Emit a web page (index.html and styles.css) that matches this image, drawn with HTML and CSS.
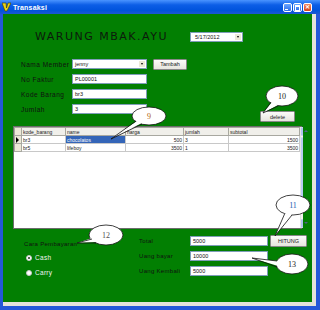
FILE: index.html
```html
<!DOCTYPE html>
<html lang="id">
<head>
    <meta charset="UTF-8">
    <title>Transaksi</title>
    <link rel="stylesheet" href="styles.css">
</head>
<body>
<div class="window">
    <div class="titlebar">
        <svg class="app-icon" width="9" height="10" viewBox="0 0 9 10">
            <path d="M0 1 L4 1 L4.5 6 L6 1 L9 1 L5 9 L3 9 Z" fill="#e8d21a" stroke="#3a3a00" stroke-width="0.6"/>
        </svg>
        <span class="title">Transaksi</span>
        <div class="controls">
            <span class="ctl min"></span>
            <span class="ctl max"></span>
            <span class="ctl close">&#x2715;</span>
        </div>
    </div>

    <div class="frame">
        <div class="client">
            <div class="header">
                <h1>WARUNG MBAK.AYU</h1>
                <div class="combo date">5/17/2012<span class="drop"></span></div>
            </div>

            <div class="form">
                <div class="row">
                    <label>Nama Member</label>
                    <div class="combo field">jenny<span class="drop"></span></div>
                    <button class="btn tambah">Tambah</button>
                </div>
                <div class="row">
                    <label>No Faktur</label>
                    <div class="field">PL00001</div>
                </div>
                <div class="row">
                    <label>Kode Barang</label>
                    <div class="field">br3</div>
                </div>
                <div class="row">
                    <label>Jumlah</label>
                    <div class="field">3</div>
                </div>
            </div>

            <div class="actions">
                <button class="btn delete">delete</button>
            </div>

            <div class="grid">
                <table>
                    <tr class="head">
                        <td class="rh"></td>
                        <td class="c1">kode_barang</td>
                        <td class="c2">name</td>
                        <td class="c3">harga</td>
                        <td class="c4">jumlah</td>
                        <td class="c5">subtotal</td>
                    </tr>
                    <tr>
                        <td class="rh"><span class="cur"></span></td>
                        <td>br3</td>
                        <td class="sel">chocolatos</td>
                        <td class="num">500</td>
                        <td>3</td>
                        <td class="num">1500</td>
                    </tr>
                    <tr>
                        <td class="rh"></td>
                        <td>br5</td>
                        <td>lifeboy</td>
                        <td class="num">3500</td>
                        <td>1</td>
                        <td class="num">3500</td>
                    </tr>
                </table>
                <div class="scrollbar">
                    <span class="arrow up"></span>
                    <span class="thumb"></span>
                    <span class="arrow down"></span>
                </div>
            </div>

            <div class="bottom">
                <div class="pay">
                    <div class="pay-title">Cara Pembayaran</div>
                    <div class="radio"><span class="dot on"></span>Cash</div>
                    <div class="radio"><span class="dot"></span>Carry</div>
                </div>
                <div class="totals">
                    <div class="row">
                        <label>Total</label>
                        <div class="field wide">5000</div>
                        <button class="btn hitung">HITUNG</button>
                    </div>
                    <div class="row">
                        <label>Uang bayar</label>
                        <div class="field wide">10000</div>
                    </div>
                    <div class="row">
                        <label>Uang Kembali</label>
                        <div class="field wide">5000</div>
                    </div>
                </div>
            </div>
        </div>
    </div>

    <!-- balloon notes drawn on top of the form -->
    <svg class="callouts" width="320" height="310" viewBox="0 0 320 310">
        <g class="note">
            <ellipse cx="149" cy="116" rx="17" ry="9"/>
            <path class="fill" d="M137 121 L112 138 L142 123 Z"/>
            <polyline points="136,121 111,139 142,124"/>
            <text x="149" y="119" fill="#b06010">9</text>
        </g>
        <g class="note">
            <ellipse cx="282" cy="96" rx="16" ry="10"/>
            <path class="fill" d="M272 102 L263 113 L278 105 Z"/>
            <polyline points="271,102 263,113 278,106"/>
            <text x="282" y="99" fill="#202020">10</text>
        </g>
        <g class="note">
            <ellipse cx="293" cy="205" rx="17" ry="10"/>
            <path class="fill" d="M285 212 L275 236 L292 214 Z"/>
            <polyline points="285,213 275,236 292,215"/>
            <text x="293" y="208" fill="#1a5ab0">11</text>
        </g>
        <g class="note">
            <ellipse cx="106" cy="235" rx="17" ry="10"/>
            <path class="fill" d="M92 238 L77 243 L96 242 Z"/>
            <polyline points="92,239 77,243 96,243"/>
            <text x="106" y="238" fill="#505050">12</text>
        </g>
        <g class="note">
            <ellipse cx="292" cy="264" rx="16" ry="10"/>
            <path class="fill" d="M278 261 L252 258 L278 266 Z"/>
            <polyline points="277,261 252,258 277,267"/>
            <text x="292" y="267" fill="#202020">13</text>
        </g>
    </svg>
</div>
</body>
</html>
```

FILE: styles.css
```css
body {
    margin: 0;
    font-family: "Liberation Sans", Arial, sans-serif;
}

.window {
    position: relative;
    width: 320px;
    height: 310px;
    background: #2458d8;
    display: flex;
    flex-direction: column;
}

.titlebar {
    height: 14px;
    display: flex;
    align-items: center;
    padding: 0 8px 0 2px;
    background: linear-gradient(#4a94ff, #0c5ee6 35%, #0053dc 75%, #1c58d0);
    color: #fff;
}
.app-icon { display: block; }
.title {
    font-size: 7px;
    font-weight: bold;
    margin-left: 2px;
    letter-spacing: 0.2px;
}
.controls {
    margin-left: auto;
    display: flex;
    gap: 1px;
}
.ctl {
    position: relative;
    width: 7px;
    height: 7px;
    border: 1px solid #fff;
    border-radius: 2px;
    background: linear-gradient(#6aa6ff, #2c6ce8);
    color: #fff;
    font-size: 6px;
    line-height: 7px;
    text-align: center;
}
.ctl.min::after {
    content: "";
    position: absolute;
    left: 1px;
    bottom: 1px;
    width: 3px;
    height: 1px;
    background: #fff;
}
.ctl.max::after {
    content: "";
    position: absolute;
    left: 1px;
    top: 1px;
    width: 3px;
    height: 3px;
    border: 1px solid #fff;
    border-top-width: 2px;
}
.ctl.close {
    background: linear-gradient(#f08a64, #d8421a);
    font-weight: bold;
}

.frame {
    flex: 1;
    display: flex;
    margin: 0 4px 4px 3px;
    background: #e4e2da;
    padding: 0 4px 4px 0;
}
.client {
    flex: 1;
    background: #027f02;
    display: flex;
    flex-direction: column;
}

/* header */
.header {
    display: flex;
    align-items: center;
    padding: 18px 0 0 32px;
}
h1 {
    margin: 0;
    width: 155px;
    font-family: "DejaVu Sans", sans-serif;
    font-weight: normal;
    font-size: 11px;
    line-height: 10px;
    letter-spacing: 1.5px;
    color: #0c1a0c;
}

.combo, .field {
    position: relative;
    box-sizing: border-box;
    height: 10px;
    background: #fff;
    border: 1px solid #7f9db9;
    font-size: 5.5px;
    line-height: 8px;
    padding-left: 2px;
    color: #111;
}
.combo.date {
    width: 53px;
    padding-left: 4px;
}
.drop {
    position: absolute;
    right: 1px;
    top: 1px;
    width: 6px;
    height: 6px;
    background: #ece9d8;
}
.drop::after {
    content: "";
    position: absolute;
    left: 1.5px;
    top: 2px;
    border: 1.5px solid transparent;
    border-top: 2px solid #000;
}

/* form */
.form {
    display: flex;
    flex-direction: column;
    gap: 5px;
    padding: 17px 0 0 18px;
}
.row {
    display: flex;
    align-items: center;
    height: 10px;
}
label {
    width: 51px;
    font-size: 6.5px;
    letter-spacing: 0.5px;
    color: #101010;
}
.form .field { width: 75px; }

.btn {
    box-sizing: border-box;
    height: 11px;
    padding: 0;
    border: 1px solid #888;
    border-radius: 1px;
    background: linear-gradient(#fbfbf9, #e6e5de);
    font-family: "Liberation Sans", Arial, sans-serif;
    font-size: 5.5px;
    color: #222;
}
.btn.tambah {
    width: 34px;
    margin-left: 6px;
}
.actions {
    display: flex;
    justify-content: flex-end;
    margin-top: -3px;
    padding-right: 17px;
}
.btn.delete { width: 35px; }

/* data grid */
.grid {
    display: flex;
    box-sizing: border-box;
    width: 289px;
    height: 103px;
    margin: 4px 0 0 10px;
    background: #fff;
    border: 1px solid #6c6c6c;
}
table {
    border-collapse: collapse;
    width: 279px;
    align-self: flex-start;
    table-layout: fixed;
}
td {
    height: 7px;
    padding: 0 1px;
    border: 1px solid #c8c8c8;
    font-size: 5px;
    line-height: 6px;
    color: #222;
    white-space: nowrap;
    overflow: hidden;
}
.head td {
    background: #f0efea;
    border-color: #a8a8a0;
}
td.rh {
    width: 4px;
    background: #ece9d8;
    border-color: #a8a8a0;
    position: relative;
}
.c1 { width: 41px; }
.c2 { width: 57px; }
.c3 { width: 55px; }
.c4 { width: 42px; }
.c5 { width: 68px; }
td.num { text-align: right; }
td.sel {
    background: #3465b8;
    color: #fff;
}
.cur {
    position: absolute;
    left: 1px;
    top: 1px;
    border: 3px solid transparent;
    border-left: 3px solid #000;
    border-right: 0;
}

.scrollbar {
    margin-left: auto;
    width: 8px;
    display: flex;
    flex-direction: column;
    background: #f5f4f0;
    border-left: 1px solid #e4e4e4;
}
.arrow {
    height: 7px;
    background: #c6d6f6;
    border: 1px solid #b0c4ee;
    border-radius: 1px;
    position: relative;
}
.arrow::after {
    content: "";
    position: absolute;
    left: 1.5px;
    border: 2px solid transparent;
}
.arrow.up::after { top: 0; border-bottom: 2px solid #4d6185; }
.arrow.down::after { top: 2px; border-top: 2px solid #4d6185; }
.thumb {
    height: 60px;
    margin: 1px 0;
    background: linear-gradient(90deg, #dce7fb, #c7d8fa);
    border: 1px solid #b8cbf2;
    border-radius: 1px;
}
.arrow.down { margin-top: auto; }

/* payment block */
.bottom {
    display: flex;
    margin-top: 7px;
    padding-left: 21px;
}
.pay {
    width: 115px;
    font-size: 6px;
    letter-spacing: 0.3px;
    color: #101010;
}
.pay-title {
    margin-top: 4px;
    line-height: 8px;
}
.radio {
    display: flex;
    align-items: center;
    gap: 3px;
    margin-top: 4px;
    height: 11px;
    margin-left: 2px;
    color: #f2f2f2;
    font-size: 6.5px;
}
.dot {
    box-sizing: border-box;
    width: 6px;
    height: 6px;
    border-radius: 50%;
    background: #fff;
    border: 1px solid #c8c8c8;
    position: relative;
}
.dot.on::after {
    content: "";
    position: absolute;
    left: 1px;
    top: 1px;
    width: 2px;
    height: 2px;
    border-radius: 50%;
    background: #1c3a1c;
}
.totals {
    display: flex;
    flex-direction: column;
    gap: 5px;
}
.totals label {
    font-size: 6px;
    letter-spacing: 0.3px;
}
.field.wide { width: 78px; }
.btn.hitung {
    width: 37px;
    height: 12px;
    margin-left: 2px;
}

/* balloon notes */
.callouts {
    position: absolute;
    left: 0;
    top: 0;
    pointer-events: none;
}
.note ellipse {
    fill: #fff;
    stroke: #111;
    stroke-width: 0.8;
}
.note .fill { fill: #fff; }
.note polyline {
    fill: none;
    stroke: #111;
    stroke-width: 0.8;
}
.note text {
    font-family: "Liberation Serif", serif;
    font-size: 8px;
    text-anchor: middle;
}
```
